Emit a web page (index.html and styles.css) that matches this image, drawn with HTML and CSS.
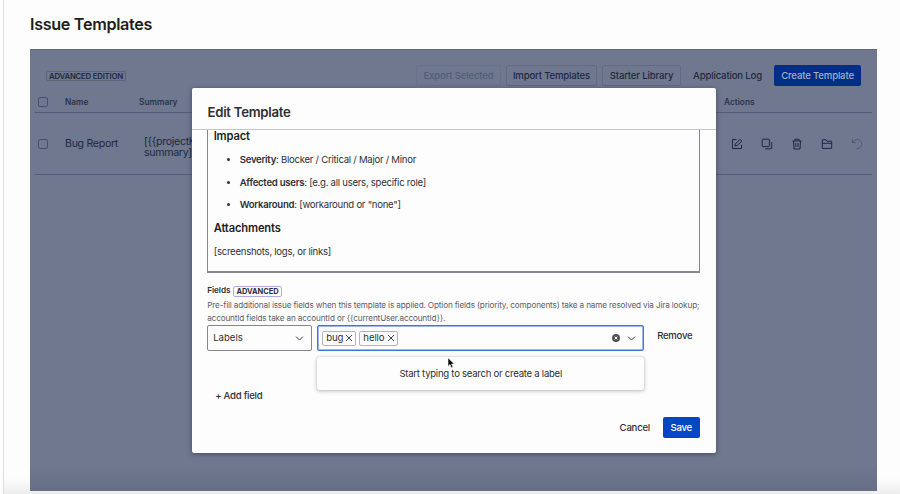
FILE: index.html
```
<!DOCTYPE html>
<html lang="en">

  <head>
    <meta charset="utf-8">
    <title>Issue Templates</title>
    <link rel="stylesheet" href="styles.css">
  </head>

  <body>

    <main class="page">
      <h1><span>Issue Templates</span></h1>

      <div class="app">

        <div class="toolbar">
          <span class="edition">ADVANCED EDITION</span>
          <div class="actions">
            <button class="btn disabled export"><span>Export Selected</span></button>
            <button class="btn import"><span>Import Templates</span></button>
            <button class="btn starter"><span>Starter Library</span></button>
            <button class="btn plain log"><span>Application Log</span></button>
            <button class="btn create"><span>Create Template</span></button>
          </div>
        </div>

        <div class="row head">
          <i class="check"></i>
          <span>Name</span>
          <span>Summary</span>
          <span>Actions</span>
        </div>

        <div class="row item">
          <i class="check"></i>
          <span class="name">Bug Report</span>
          <span class="summary">[{{projectK<br>summary]</span>
          <div class="icons">
            <svg viewBox="0 0 12 12"><path d="M5.5 1.5H1.5V10.5H10.5V6.8M4 8L4.5 5.8L9 1.3L10.8 3.1L6.2 7.5Z"/></svg>
            <svg viewBox="0 0 12 12"><rect x="1.2" y="1.2" width="7.2" height="7.4" rx=".6"/><path d="M10.7 4V10.2Q10.7 10.8 10.1 10.8H4"/></svg>
            <svg viewBox="0 0 12 12"><path d="M1.5 3H10.5M4 3V1.2H8V3M2.5 3L3 11H9L9.5 3M4.9 5V9M7.1 5V9"/></svg>
            <svg viewBox="0 0 12 12"><path d="M1.3 10.4V1.7H4.8L6 3.2H10.7V10.4ZM1.3 5.3H10.7"/></svg>
            <svg class="off" viewBox="0 0 12 12"><path d="M1.4 1.5V4.7H4.6M1.6 4.6C4.3-.3 10.8 1.2 10.6 6.2C10.5 9.2 8 10.8 5.5 10.5"/></svg>
          </div>
        </div>

      </div>
    </main>

    <div class="modal">

      <div class="modal-head"><h2><span>Edit Template</span></h2></div>

      <div class="modal-body">
        <div class="editor">
          <h3 class="impact">Impact</h3>
          <ul>
            <li><b>Severity</b>: Blocker / Critical / Major / Minor</li>
            <li><b>Affected users</b>: [e.g. all users, specific role]</li>
            <li><b>Workaround</b>: [workaround or "none"]</li>
          </ul>
          <h3>Attachments</h3>
          <p>[screenshots, logs, or links]</p>
        </div>

        <div class="label"><b>Fields</b><span class="advanced">ADVANCED</span></div>
        <p class="help">Pre-fill additional issue fields when this template is applied. Option fields (priority, components) take a name resolved via Jira lookup;<br>accountId fields take an accountId or {{currentUser.accountId}}.</p>

        <div class="field">
          <div class="select">
            <span>Labels</span>
            <svg class="chevron" viewBox="0 0 8 8"><path d="M1 2.4L4 5.4L7 2.4"/></svg>
          </div>
          <div class="multi">
            <span class="tag">bug <svg viewBox="0 0 8 8"><path d="M1 1L7 7M7 1L1 7"/></svg></span>
            <span class="tag">hello <svg viewBox="0 0 8 8"><path d="M1 1L7 7M7 1L1 7"/></svg></span>
            <svg class="clear" viewBox="0 0 8 8"><circle cx="4" cy="4" r="4"/><path d="M2.6 2.6L5.4 5.4M5.4 2.6L2.6 5.4"/></svg>
            <svg class="chevron" viewBox="0 0 8 8"><path d="M1 2.4L4 5.4L7 2.4"/></svg>
            <div class="menu">Start typing to search or create a label</div>
          </div>
          <span class="remove">Remove</span>
        </div>

        <div class="add">+ Add field</div>
      </div>

      <div class="modal-foot">
        <span>Cancel</span>
        <button class="save">Save</button>
      </div>

    </div>

    <svg class="pointer" viewBox="0 0 8 12"><path d="M1 .8V9.4L3 7.5L4.3 10.8L6 10.1L4.6 7H7.3Z"/></svg>

  </body>

</html>
```
FILE: styles.css
```
* {
  box-sizing: border-box;
}

body {
  margin: 0;
  height: 494px;
  overflow: hidden;
  position: relative;
  background: #fdfdfe;
  color: #2f3034;
  font: 9.6px/12px Inter, "Liberation Sans", sans-serif;
  letter-spacing: -.27px;
}

h1, h2, h3, p, ul {
  margin: 0;
}

button {
  font: inherit;
  letter-spacing: inherit;
  border: 0;
  padding: 0;
}

svg {
  fill: none;
  stroke: currentColor;
  flex: none;
}

.page {
  height: 494px;
  margin-left: 3px;
  border-left: 1px solid #dedee1;
  padding: 14px 23px 0 26px;
  background: linear-gradient(#fdfdfe 478px, #ededee 494px);
}

h1 {
  height: 35px;
  font-size: 16.2px;
  line-height: 21px;
  font-weight: 600;
  letter-spacing: -.33px;
  color: #1e1f21;
}

.app {
  height: 442px;
  padding: 15px 5px 0;
  border-top: 1px solid #626b82;
  background: linear-gradient(#6f788e 415px, #656e85 442px);
  color: #1c2942;
}

/* toolbar */

.toolbar {
  display: flex;
  justify-content: space-between;
  height: 26px;
  padding: 0 11px;
}

.edition {
  height: 10px;
  margin-top: 6px;
  padding: 0 2px;
  border: 1px solid #5c6373;
  border-radius: 2px;
  font-size: 7.8px;
  line-height: 9px;
  font-weight: 600;
  letter-spacing: -.22px;
}

.actions {
  display: flex;
  gap: 5px;
  letter-spacing: -.18px;
}

.btn {
  height: 21px;
  border: 1px solid #616b81;
  border-radius: 2px;
  background: none;
  color: #1c2942;
  font-weight: 500;
  line-height: 19px;
  white-space: nowrap;
}

.export { width: 85px; }
.import { width: 91px; }
.starter { width: 79px; }
.log { width: 83px; }

.create {
  width: 87px;
  border: 0;
  background: #002e87;
  color: #a4b0c9;
}

.disabled {
  border-color: #687288;
  color: #535e76;
}

.plain {
  border-color: transparent;
}

/* table */

.row {
  display: grid;
  grid-template-columns: 30px 74px 585px 1fr;
  align-items: center;
  border-bottom: 1px solid #525d75;
}

.head {
  height: 22px;
  font-size: 8.3px;
  font-weight: 600;
  letter-spacing: 0;
  color: #28344d;
}

.item {
  height: 62px;
}

.check {
  width: 10px;
  height: 10px;
  margin-left: 3px;
  border: 1px solid #465169;
  border-radius: 2px;
}

.name,
.summary {
  font-size: 10.6px;
  letter-spacing: -.3px;
}

.summary {
  padding: 6px 0 0 5px;
  line-height: 11px;
}

.icons {
  display: flex;
  gap: 18px;
  padding-left: 7px;
}

.icons svg {
  width: 12px;
  height: 12px;
}

.icons .off {
  color: #4e5970;
}

/* edit dialog */

.modal {
  position: absolute;
  left: 191.5px;
  top: 88.3px;
  width: 524px;
  height: 365px;
  border-radius: 2px;
  background: #fdfdfe;
  box-shadow: 0 1px 5px rgba(30, 31, 50, .5);
}

.modal-head {
  height: 42px;
  padding: 14px 16px 0;
  border-bottom: 1px solid #c4c5ca;
}

h2 {
  font-size: 13.2px;
  line-height: 20px;
  font-weight: 600;
}

.modal-body {
  padding: 0 16px 0 15.7px;
}

.editor {
  height: 143px;
  padding-left: 5.5px;
  border: solid #85878e;
  border-width: 0 1px 2px;
}

h3 {
  height: 24px;
  font-size: 11.2px;
  line-height: 14px;
  font-weight: 600;
  letter-spacing: -.16px;
  color: #1e1f21;
}

.impact {
  height: 18px;
  line-height: 12px;
}

.editor ul {
  padding: 1px 0 0 26px;
  height: 73px;
}

.editor li {
  height: 22.3px;
  line-height: 22.3px;
}

.editor b {
  font-weight: 600;
}

.editor p {
  padding-top: 1px;
}

.label {
  display: flex;
  gap: 3px;
  height: 26px;
  padding-top: 10.7px;
  font-size: 8.2px;
  letter-spacing: -.05px;
}

.label b {
  font-weight: 600;
}

.advanced {
  height: 11px;
  margin-top: 2px;
  padding: 0 2px;
  border: 1px solid #b9a7e4;
  border-radius: 2px;
  font-size: 7.5px;
  line-height: 9px;
  font-weight: 700;
}

.help {
  height: 26px;
  font-size: 8.2px;
  line-height: 13px;
  letter-spacing: -.16px;
  white-space: nowrap;
  color: #5c5e66;
}

.field {
  display: flex;
  height: 57px;
}

.select,
.multi {
  display: flex;
  align-items: center;
  height: 26px;
  border: 1px solid #85878e;
  border-radius: 2px;
}

.select {
  width: 105px;
  margin-right: 5px;
  padding: 0 7px 0 5px;
  justify-content: space-between;
  letter-spacing: 0;
}

.chevron {
  width: 9px;
  height: 9px;
  stroke-width: .85;
}

.multi {
  position: relative;
  width: 327px;
  padding: 0 7px 0 4px;
  border: 1px solid #3a76dc;
  box-shadow: inset 0 0 0 .5px #3a76dc;
}

.tag {
  display: flex;
  align-items: center;
  gap: 2px;
  height: 15px;
  margin-right: 3px;
  padding: 0 2px 0 3px;
  border: 1px solid #b3b5bb;
  border-radius: 2px;
  letter-spacing: -.1px;
}

.tag svg {
  width: 8px;
  height: 8px;
  stroke-width: .9;
}

.clear {
  width: 8px;
  height: 8px;
  margin: 0 7px 0 auto;
}

.clear circle {
  fill: #505258;
  stroke: none;
}

.clear path {
  stroke: #fff;
}

.menu {
  position: absolute;
  left: -1px;
  top: 31px;
  width: 327px;
  height: 33px;
  border-radius: 2px;
  background: #fdfdfe;
  box-shadow: 0 1px 4px rgba(30, 31, 33, .3), 0 0 1px rgba(30, 31, 33, .3);
  line-height: 33px;
  text-align: center;
}

.remove {
  margin: 5px 0 0 13px;
  font-weight: 500;
}

.add {
  padding: 8px 0 0 8px;
  font-weight: 500;
}

.modal-foot {
  display: flex;
  justify-content: flex-end;
  align-items: center;
  gap: 13px;
  margin-top: 15px;
  padding-right: 16px;
  font-weight: 500;
  letter-spacing: -.24px;
}

.save {
  width: 36.5px;
  height: 21px;
  border-radius: 2px;
  background: #0546c4;
  color: #fff;
}

.pointer {
  position: absolute;
  left: 447px;
  top: 357px;
  width: 8px;
  height: 12px;
  fill: #000;
  stroke: #fff;
  stroke-width: .6;
}
```
